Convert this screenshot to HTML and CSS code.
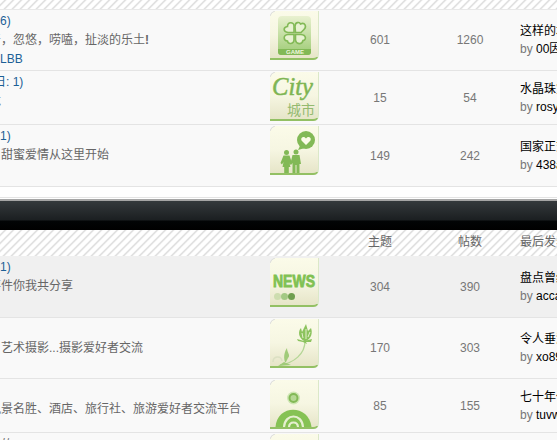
FILE: index.html
```
<!DOCTYPE html>
<html>
<head>
    <meta charset="UTF-8" />
    <title>论坛</title>
    <link rel="stylesheet" href="styles.css">
</head>
<body>
    <svg class="defs" width="0" height="0">
        <defs>
            <linearGradient id="paper" x1="0" y1="0" x2="0" y2="1">
                <stop offset="0" stop-color="#fbfbe9"/>
                <stop offset=".5" stop-color="#f6f6e2"/>
                <stop offset="1" stop-color="#e6e5c8"/>
            </linearGradient>
            <linearGradient id="card" x1="0" y1="0" x2="0" y2="1">
                <stop offset="0" stop-color="#e9f1d0"/>
                <stop offset="1" stop-color="#9dcb74"/>
            </linearGradient>
            <symbol id="tile" viewBox="0 0 50 50">
                <path d="M5 0H49V43Q49 49 43 49H0V5Q1 1 5 0Z" fill="#dbe8c8"/>
                <path d="M0 46H48Q47 49 43 49H0Z" fill="#93c064"/>
                <path d="M5 0H48V42Q48 47 43 47H0V5Q1 1 5 0Z" fill="url(#paper)"/>
                <path d="M0 5Q1 1 5 0" fill="none" stroke="#ddd"/>
            </symbol>
        </defs>
    </svg>
    <div class="forum">
        <div class="head short"></div>
        <div class="row r1">
            <div class="desc">
                <p class="link">6)</p>
                <p class="cut">牙，忽悠，唠嗑，扯淡的乐土<b>!</b></p>
                <p class="link">LBB</p>
            </div>
            <svg class="icon" viewBox="0 0 50 50">
                <use href="#tile"/>
                <rect x="8" y="5" width="33" height="39" rx="4" fill="url(#card)"/>
                <path d="M8 38H41V41Q41 44 38 44H11Q8 44 8 41Z" fill="#82b956"/>
                <g fill="#e8f2d2" stroke="#82b956" stroke-width="1.6">
                    <path d="M24 21.500H18C13 21 13 16 17.500 15.500C17.500 10.500 24 10.500 24 15Z"/>
                    <path d="M25.500 21.500L25 15.500C25 11 29.500 10.500 30.500 13C35 11 37 15.500 34 18.500L31 21.500Z"/>
                    <path d="M24 23.500V28.500C24 33.500 18 33.500 17.500 30C13 29.500 13 24 18 23.500Z"/>
                    <path d="M25.500 23.500H31C36.500 24 36.500 29 33 29.500C32 34 26 33.500 25.500 29Z"/>
                </g>
                <text class="game" x="25" y="43">GAME</text>
            </svg>
            <div class="num">601</div>
            <div class="num">1260</div>
            <div class="last">
                <p class="title">这样的地方</p>
                <p>by <a>00因为</a></p>
            </div>
        </div>
        <div class="row r2">
            <div class="desc">
                <p class="link cut2">日: 1)</p>
                <p class="cut">龙</p>
            </div>
            <svg class="icon" viewBox="0 0 50 50">
                <use href="#tile"/>
                <text class="city" x="2" y="23" textLength="41" lengthAdjust="spacingAndGlyphs">City</text>
                <text class="cn" x="17" y="43">城市</text>
            </svg>
            <div class="num">15</div>
            <div class="num">54</div>
            <div class="last">
                <p class="title">水晶珠宝</p>
                <p>by <a>rosyan</a></p>
            </div>
        </div>
        <div class="row r3">
            <div class="desc">
                <p class="link">1)</p>
                <p class="in">甜蜜爱情从这里开始</p>
            </div>
            <svg class="icon" viewBox="0 0 50 50">
                <use href="#tile"/>
                <circle cx="36" cy="14" r="9" fill="#82b956"/>
                <path d="M30 20L28 24L35 22Z" fill="#82b956"/>
                <path d="M36 19L31.500 14.500C30 11 34.500 9.500 36 12.500C37.500 9.500 42 11 40.500 14.500Z" fill="#fbfbe8"/>
                <g fill="#82b956">
                    <circle cx="16.500" cy="26.500" r="2.500"/>
                    <path d="M13.500 29.500H19.500L22 37L20 39L19 36L20.500 41H18.800V47H14.200V41H12.500L13.500 36L12 38.500L10.500 37Z"/>
                    <circle cx="26" cy="26" r="2.500"/>
                    <path d="M22.500 29H29.500L31 38H29.500V47H26.500V39H25.500V47H22.500V37L21 39L20.500 37Z"/>
                </g>
            </svg>
            <div class="num">149</div>
            <div class="num">242</div>
            <div class="last">
                <p class="title">国家正式</p>
                <p>by <a>438a12</a></p>
            </div>
        </div>
        <div class="gap"></div>
        <div class="bar"></div>
        <div class="head">
            <div class="desc"></div>
            <div class="blank"></div>
            <div class="num">主题</div>
            <div class="num">帖数</div>
            <div class="last">最后发表</div>
        </div>
        <div class="row r4 on">
            <div class="desc">
                <p class="link">1)</p>
                <p class="cut">事件你我共分享</p>
            </div>
            <svg class="icon" viewBox="0 0 50 50">
                <use href="#tile"/>
                <text class="news" x="3" y="29" textLength="42" lengthAdjust="spacingAndGlyphs">NEWS</text>
                <circle cx="7.500" cy="38.500" r="3.500" fill="#cdddaf"/>
                <circle cx="14.500" cy="38.500" r="3.500" fill="#a3c983"/>
                <circle cx="21.500" cy="38.500" r="3.500" fill="#6f9f4e"/>
            </svg>
            <div class="num">304</div>
            <div class="num">390</div>
            <div class="last">
                <p class="title">盘点曾经</p>
                <p>by <a>acca88</a></p>
            </div>
        </div>
        <div class="row r5">
            <div class="desc">
                <p class="link">&nbsp;</p>
                <p class="in">艺术摄影...摄影爱好者交流</p>
            </div>
            <svg class="icon" viewBox="0 0 50 50">
                <use href="#tile"/>
                <path d="M10 46C24 44 35 35 35 22" fill="none" stroke="#b4d695" stroke-width="1.300"/>
                <path d="M34 22C28 18 28 12 31 9L32 13L36 5L38 12L41 9C43 14 41 20 36 22Z" fill="#8cc35e"/>
                <path d="M33 19L32 14M36 20V10M38 18L40 13" stroke="#e5efcc" fill="none"/>
                <path d="M27 20L34 22L42 20L41 23L36 23L37 25L33 23L28 22Z" fill="#8cc35e"/>
                <path d="M15 43C13 37 15 32 17 29C17 34 21 36 18 39L16 43ZM8 47L14 43L21 46Z" fill="#a0cb79"/>
                <path d="M3 43C3 37 11 36 12 42" fill="none" stroke="#dbe0c3" stroke-width="1.500"/>
            </svg>
            <div class="num">170</div>
            <div class="num">303</div>
            <div class="last">
                <p class="title">令人垂涎</p>
                <p>by <a>xo8988</a></p>
            </div>
        </div>
        <div class="row r6">
            <div class="desc">
                <p class="link">&nbsp;</p>
                <p class="cut">风景名胜、酒店、旅行社、旅游爱好者交流平台</p>
            </div>
            <svg class="icon" viewBox="0 0 50 50">
                <use href="#tile"/>
                <circle cx="23.500" cy="18" r="6.500" fill="#cfe6b4"/>
                <circle cx="23.500" cy="18" r="4" fill="#b5d894" stroke="#82b956" stroke-width="2"/>
                <path d="M5.500 47C7 24 39 24 41.500 47Z" fill="#86c254"/>
                <path d="M14 47C15 33 32 33 33 47M19 47C19.500 41 27.500 41 28 47" fill="none" stroke="#e6efd0" stroke-width="2.200"/>
            </svg>
            <div class="num">85</div>
            <div class="num">155</div>
            <div class="last">
                <p class="title">七十年代</p>
                <p>by <a>tuvwx</a></p>
            </div>
        </div>
        <div class="row r7">
            <div class="desc"><p class="in">的</p></div>
            <svg class="icon" viewBox="0 0 50 50"><use href="#tile"/></svg>
        </div>
    </div>
</body>
</html>
```
FILE: styles.css
```
*{ margin:0; padding:0;}
body{
    overflow: hidden;
    background: #fff;
    color: #666;
    font: 12px/18px "Liberation Sans","Noto Sans CJK SC",sans-serif;
}
.defs{
    display: block;
}
.forum{
    overflow: hidden;
    width: 557px;
    height: 440px;
}
.head{
    display: flex;
    box-sizing: border-box;
    height: 26px;
    line-height: 25px;
    background: repeating-linear-gradient(135deg,#fff 0,#fff 2.500px,#d8d8d8 3.800px,#fff 5.200px,#fff 5.657px);
}
.head.short{
    height: 10px;
    border-bottom: 1px solid #e8e8e8;
}
.row{
    display: flex;
    align-items: center;
    box-sizing: border-box;
    background: #f9f9f9;
    border-bottom: 1px solid #e4e4e4;
}
.row.on{
    background: #f0f0f0;
}
.r1{ height: 61px;}
.r2{ height: 54px;}
.r3{ height: 62px;}
.r4{ height: 62px;}
.r5{ height: 61px;}
.r6{ height: 54px;}
.r7{ height: 60px;}
.desc{
    flex: none;
    align-self: flex-start;
    box-sizing: border-box;
    width: 270px;
    padding-top: 2px;
    line-height: 19px;
    white-space: nowrap;
}
.desc .cut{
    text-indent: -11px;
}
.desc .cut2{
    text-indent: -6px;
}
.desc .in{
    text-indent: 1px;
}
.r7 .desc{
    padding-top: 3px;
}
.link{
    color: #1c5f96;
}
.icon,.blank{
    flex: none;
    align-self: flex-start;
    width: 50px;
    height: 50px;
    margin: 1px 15px 0 0;
}
.blank{
    height: 1px;
}
.r4 .icon{
    margin-top: 2px;
}
.num{
    flex: none;
    width: 90px;
    text-align: center;
}
.row .num{
    color: #777;
}
.last{
    flex: none;
    width: 100px;
    margin-left: 5px;
    white-space: nowrap;
}
.row .last{
    color: #777;
}
.last .title,.last a{
    color: #000;
}
.gap{
    box-sizing: border-box;
    height: 11px;
    margin-bottom: 1px;
    border-bottom: 1px solid #e4e4e4;
}
.bar{
    box-sizing: border-box;
    height: 31px;
    border-top: 2px solid #a5a5a5;
    background: linear-gradient(#34393c 0,#1b1f21 19px,#020405 20px,#000 100%);
}
.game{
    fill: #eef6dd;
    font: bold 6px "Liberation Sans",sans-serif;
    text-anchor: middle;
}
.city{
    fill: #7eb552;
    font: italic 26px "Liberation Serif",serif;
    stroke: #7eb552;
    stroke-width: .5;
}
.cn{
    fill: #94ba70;
    font: 14px "Noto Sans CJK SC",sans-serif;
}
.news{
    fill: #80c152;
    stroke: #80c152;
    stroke-width: .8;
    font: bold 16px "Liberation Sans",sans-serif;
}
```
